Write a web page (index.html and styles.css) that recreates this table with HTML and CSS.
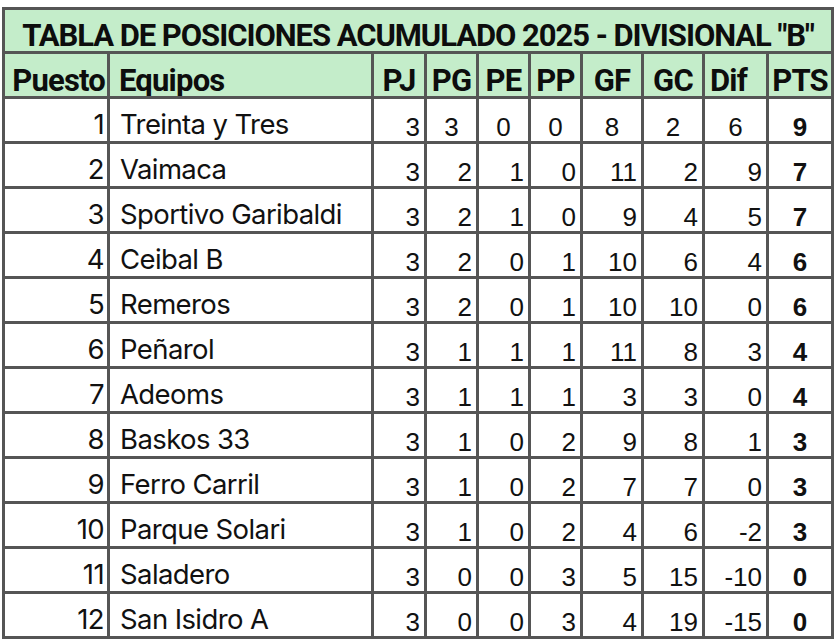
FILE: index.html
```html
<!DOCTYPE html>
<html lang="es">
<head>
<meta charset="utf-8">
<title>Tabla de posiciones</title>
<link rel="stylesheet" href="styles.css">
</head>
<body>
<table class="standings">
  <colgroup>
    <col class="c-pos"><col class="c-team"><col class="c-pj"><col class="c-n"><col class="c-n"><col class="c-n"><col class="c-g"><col class="c-g"><col class="c-dif"><col class="c-pts">
  </colgroup>
  <thead>
    <tr class="title-row"><th colspan="10">TABLA DE POSICIONES ACUMULADO 2025 - DIVISIONAL "B"</th></tr>
    <tr class="head-row">
      <th class="h-pos">Puesto</th><th class="h-team">Equipos</th><th>PJ</th><th>PG</th><th>PE</th><th>PP</th><th>GF</th><th>GC</th><th class="h-dif">Dif</th><th>PTS</th>
    </tr>
  </thead>
  <tbody>
    <tr class="centered"><td class="pos">1</td><td class="team">Treinta y Tres</td><td class="num pj">3</td><td class="num">3</td><td class="num">0</td><td class="num">0</td><td class="num">8</td><td class="num">2</td><td class="num">6</td><td class="pts">9</td></tr>
    <tr><td class="pos">2</td><td class="team">Vaimaca</td><td class="num pj">3</td><td class="num">2</td><td class="num">1</td><td class="num">0</td><td class="num">11</td><td class="num">2</td><td class="num">9</td><td class="pts">7</td></tr>
    <tr><td class="pos">3</td><td class="team">Sportivo Garibaldi</td><td class="num pj">3</td><td class="num">2</td><td class="num">1</td><td class="num">0</td><td class="num">9</td><td class="num">4</td><td class="num">5</td><td class="pts">7</td></tr>
    <tr><td class="pos">4</td><td class="team">Ceibal B</td><td class="num pj">3</td><td class="num">2</td><td class="num">0</td><td class="num">1</td><td class="num">10</td><td class="num">6</td><td class="num">4</td><td class="pts">6</td></tr>
    <tr><td class="pos">5</td><td class="team">Remeros</td><td class="num pj">3</td><td class="num">2</td><td class="num">0</td><td class="num">1</td><td class="num">10</td><td class="num">10</td><td class="num">0</td><td class="pts">6</td></tr>
    <tr><td class="pos">6</td><td class="team">Peñarol</td><td class="num pj">3</td><td class="num">1</td><td class="num">1</td><td class="num">1</td><td class="num">11</td><td class="num">8</td><td class="num">3</td><td class="pts">4</td></tr>
    <tr><td class="pos">7</td><td class="team">Adeoms</td><td class="num pj">3</td><td class="num">1</td><td class="num">1</td><td class="num">1</td><td class="num">3</td><td class="num">3</td><td class="num">0</td><td class="pts">4</td></tr>
    <tr><td class="pos">8</td><td class="team">Baskos 33</td><td class="num pj">3</td><td class="num">1</td><td class="num">0</td><td class="num">2</td><td class="num">9</td><td class="num">8</td><td class="num">1</td><td class="pts">3</td></tr>
    <tr><td class="pos">9</td><td class="team">Ferro Carril</td><td class="num pj">3</td><td class="num">1</td><td class="num">0</td><td class="num">2</td><td class="num">7</td><td class="num">7</td><td class="num">0</td><td class="pts">3</td></tr>
    <tr><td class="pos">10</td><td class="team">Parque Solari</td><td class="num pj">3</td><td class="num">1</td><td class="num">0</td><td class="num">2</td><td class="num">4</td><td class="num">6</td><td class="num">-2</td><td class="pts">3</td></tr>
    <tr><td class="pos">11</td><td class="team">Saladero</td><td class="num pj">3</td><td class="num">0</td><td class="num">0</td><td class="num">3</td><td class="num">5</td><td class="num">15</td><td class="num">-10</td><td class="pts">0</td></tr>
    <tr><td class="pos">12</td><td class="team">San Isidro A</td><td class="num pj">3</td><td class="num">0</td><td class="num">0</td><td class="num">3</td><td class="num">4</td><td class="num">19</td><td class="num">-15</td><td class="pts">0</td></tr>
  </tbody>
</table>
</body>
</html>
```
FILE: styles.css
```css
html, body {
  margin: 0;
  padding: 0;
  background: #ffffff;
}
body {
  padding: 7px 0 0 2px;
}
.standings {
  border-collapse: collapse;
  table-layout: fixed;
  width: 831px;
  color: #111;
}
.c-pos { width: 105px; }
.c-team { width: 264px; }
.c-pj { width: 53px; }
.c-n { width: 52px; }
.c-g { width: 61px; }
.c-dif { width: 64px; }
.c-pts { width: 65px; }

.standings th,
.standings td {
  border: 3px solid #555555;
  padding: 0 4px;
  white-space: nowrap;
  overflow: hidden;
  line-height: 1;
  vertical-align: top;
}
.standings thead th {
  background: #c4edca;
  font-family: Roboto, "Liberation Sans", sans-serif;
  font-weight: 700;
  font-size: 31px;
  letter-spacing: -0.8px;
  text-align: center;
  color: #0d0d0d;
  padding: 11px 1px 0;
}
.title-row { height: 44px; }
.standings .title-row th {
  font-size: 31px;
  letter-spacing: -1.05px;
  padding-top: 10px;
}
.head-row { height: 45px; }
.head-row .h-pos { text-align: right; padding-right: 2px; }
.head-row .h-team { text-align: left; padding-left: 9px; }
.head-row .h-dif { text-align: left; padding-left: 5px; }

.standings tbody tr { height: 45px; }
.standings tbody td {
  background: #ffffff;
  padding-top: 15px;
}
.pos,
.team {
  font-family: Inter, "Noto Sans", sans-serif;
  font-size: 27.5px;
  letter-spacing: -0.6px;
}
.standings tbody .pos,
.standings tbody .team { padding-top: 12px; }
.standings tbody .pos { text-align: right; padding-right: 3px; }
.standings tbody .team { text-align: left; padding-left: 10px; }
.num {
  font-family: "Liberation Sans", Arial, sans-serif;
  font-size: 26px;
  text-align: right;
}
.standings tbody .num { padding-right: 4px; }
.centered .num { text-align: center; }
.centered .pj { text-align: right; }
.pts {
  font-family: "Liberation Sans", Arial, sans-serif;
  font-size: 26px;
  font-weight: 700;
  text-align: center;
}
```
